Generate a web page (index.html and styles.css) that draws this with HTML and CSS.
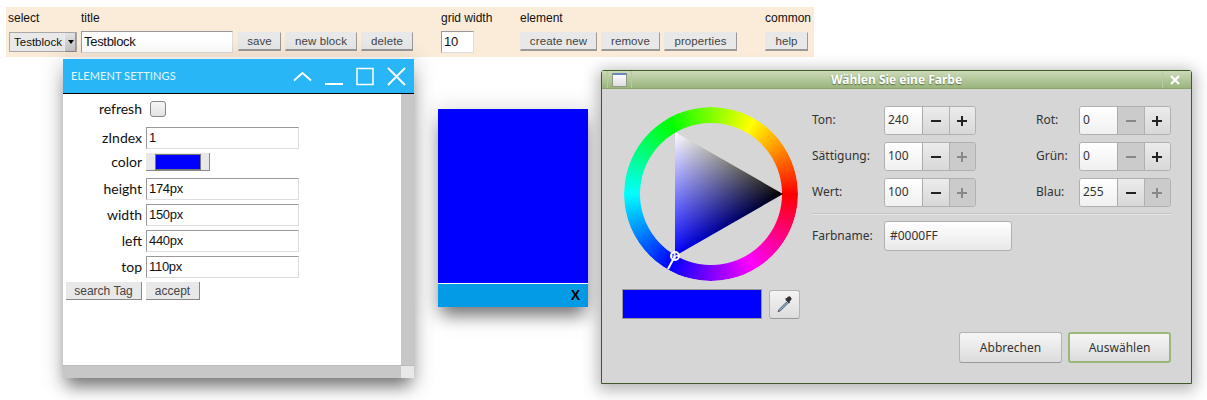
FILE: index.html
```html
<!DOCTYPE html>
<html lang="en">
<head>
<meta charset="utf-8">
<title>Block editor</title>
<link rel="stylesheet" href="styles.css">
</head>
<body>
<div class="toolbar">
  <div class="group g-select"><div class="glabel">select</div>
    <div class="controls"><span class="selectbox"><select class="sel"><option>Testblock</option></select></span></div></div>
  <div class="group g-title"><div class="glabel">title</div>
    <div class="controls"><input class="tinput title-input" value="Testblock"><button class="btn b-save">save</button><button class="btn b-new">new block</button><button class="btn b-del">delete</button></div></div>
  <div class="group g-grid"><div class="glabel">grid width</div>
    <div class="controls"><input class="tinput grid-input" value="10"></div></div>
  <div class="group g-element"><div class="glabel">element</div>
    <div class="controls"><button class="btn b-create">create new</button><button class="btn b-remove">remove</button><button class="btn b-props">properties</button></div></div>
  <div class="group g-common"><div class="glabel">common</div>
    <div class="controls"><button class="btn b-help">help</button></div></div>
</div>

<section class="settings">
  <header class="s-head">
    <span class="s-title">ELEMENT SETTINGS</span>
    <svg class="s-icons" width="120" height="34" viewBox="0 0 120 34" fill="none" stroke="#fff" stroke-width="1.800">
      <path d="M1 21.500 9.500 14l8.500 7.500"/>
      <path d="M32 25h18" stroke-width="2"/>
      <rect x="64" y="9.500" width="16" height="16" stroke-width="1.500"/>
      <path d="M95 9l17 17M112 9 95 26"/>
    </svg>
  </header>
  <div class="s-body">
    <div class="s-content">
      <div class="row row-refresh"><label class="rl">refresh</label><span class="check"></span></div>
      <div class="row"><label class="rl">zIndex</label><input class="tinput rinput" value="1"></div>
      <div class="row row-color"><label class="rl">color</label><button class="colorbtn"><span class="colorfill"></span></button></div>
      <div class="row"><label class="rl">height</label><input class="tinput rinput" value="174px"></div>
      <div class="row"><label class="rl">width</label><input class="tinput rinput" value="150px"></div>
      <div class="row"><label class="rl">left</label><input class="tinput rinput" value="440px"></div>
      <div class="row"><label class="rl">top</label><input class="tinput rinput" value="110px"></div>
      <div class="row row-btns"><button class="btn2 b-search">search Tag</button><button class="btn2 b-accept">accept</button></div>
    </div>
    <div class="sb-v"></div>
  </div>
  <div class="s-foot"><div class="sb-h"></div><div class="sb-corner"></div></div>
</section>

<div class="bluebox">
  <div class="bluefill"></div>
  <div class="bluebar"><span class="bluex">X</span></div>
</div>

<section class="dialog">
  <header class="d-title">
    <div class="d-tleft"><span class="d-menu"><span class="d-menu-ico"></span></span></div>
    <span class="d-caption">Wählen Sie eine Farbe</span>
    <div class="d-tright"><span class="d-close"><svg width="10" height="10" viewBox="0 0 10 10" stroke="#fff" stroke-width="2.200" fill="none"><path d="M1 1l8 8M9 1 1 9"/></svg></span></div>
  </header>
  <div class="d-body">
    <div class="d-main">
      <div class="d-left">
        <div class="wheelbox">
          <div class="wheel"></div>
          <div class="tri"></div>
          <svg class="marker" width="174" height="174" viewBox="0 0 174 174" fill="none" stroke="#fff">
            <path d="M51 149 44 162" stroke-width="2"/>
            <circle cx="51" cy="149" r="4" stroke-width="2"/>
            <path d="M51 145v8M47 149h8" stroke-width="1"/>
          </svg>
        </div>
        <div class="swatchrow">
          <div class="swatch"></div>
          <button class="pick"><svg width="18" height="18" viewBox="0 0 16 16">
            <path d="M9.300 6.300 2.800 12.800 1.800 15l2.200-1 6.500-6.500z" fill="#8fb0cc" stroke="#4a5560" stroke-width=".8"/>
            <path d="M8.500 4.500l3 3 1-1-.3-.9 1-1c1-1 .8-2-.1-2.700-.7-.9-1.700-1-2.700-.1l-1 1-.9-.3z" fill="#333"/>
          </svg></button>
        </div>
      </div>
      <div class="d-right">
        <div class="spins">
          <label class="sl">Ton:</label><div class="spin"><span class="sv">240</span><span class="sb"><i class="minus"></i></span><span class="sb"><i class="plus"></i></span></div>
          <label class="sl sl2">Rot:</label><div class="spin"><span class="sv">0</span><span class="sb off"><i class="minus"></i></span><span class="sb"><i class="plus"></i></span></div>
          <label class="sl">Sättigung:</label><div class="spin"><span class="sv">100</span><span class="sb"><i class="minus"></i></span><span class="sb off"><i class="plus"></i></span></div>
          <label class="sl sl2">Grün:</label><div class="spin"><span class="sv">0</span><span class="sb off"><i class="minus"></i></span><span class="sb"><i class="plus"></i></span></div>
          <label class="sl">Wert:</label><div class="spin"><span class="sv">100</span><span class="sb"><i class="minus"></i></span><span class="sb off"><i class="plus"></i></span></div>
          <label class="sl sl2">Blau:</label><div class="spin"><span class="sv">255</span><span class="sb"><i class="minus"></i></span><span class="sb off"><i class="plus"></i></span></div>
        </div>
        <div class="sep"></div>
        <div class="namerow"><label class="sl">Farbname:</label><div class="nameentry">#0000FF</div></div>
      </div>
    </div>
    <div class="d-actions"><button class="dbtn">Abbrechen</button><button class="dbtn default">Auswählen</button></div>
  </div>
</section>
</body>
</html>
```
FILE: styles.css
```css
* { box-sizing: border-box; }
html, body { margin: 0; padding: 0; }
body { width: 1207px; height: 400px; overflow: hidden; background: #fff; position: relative; font-family: "Liberation Sans", Arial, sans-serif; color: #111; }

/* toolbar */
.toolbar { display: flex; width: 808px; height: 50px; margin: 7px 0 0 6px; background: #fbebd9; padding-left: 2px; }
.group { display: flex; flex-direction: column; }
.glabel { font-size: 12px; height: 14px; line-height: 14px; margin-top: 4px; margin-bottom: 6px; }
.controls { display: flex; align-items: flex-start; }
.g-select { width: 73px; }
.g-title { width: 360px; }
.g-grid { width: 79px; }
.g-element { width: 245px; }
.selectbox { position: relative; display: block; width: 68px; height: 20px; margin: 1px 0 0 1px; border: 1px solid #a8a8a8; background: #e9e9e9; }
.selectbox::after { content: ""; position: absolute; right: 0; top: 0; width: 10px; height: 18px; background: linear-gradient(#e2e2e2, #c4c4c4); border-left: 1px solid #eee; border-right: 1px solid #999; border-bottom: 1px solid #888; }
.selectbox::before { content: ""; position: absolute; z-index: 1; right: 2px; top: 7px; border: 3px solid transparent; border-top: 4px solid #000; border-bottom: 0; }
.sel { appearance: none; display: block; width: 100%; height: 18px; border: 0; background: transparent; font: 11.500px "Liberation Sans", Arial, sans-serif; color: #111; padding: 0 0 0 4px; }
.tinput { display: block; border: 1px solid #ddd; border-top-color: #999; border-left-color: #999; background: #fff; font: 13px "Liberation Sans", Arial, sans-serif; letter-spacing: -.3px; color: #111; padding: 0 0 2px 2px; }
.title-input { width: 152px; height: 22px; }
.grid-input { width: 33px; height: 22px; }
.btn { display: block; height: 19px; padding: 0; margin: 1px 0 0 0; background: #e8e8e8; border: 1px solid #e8e8e8; border-right: 1px solid #999; border-bottom: 2px solid #999; font: 11.500px "Liberation Sans", Arial, sans-serif; letter-spacing: .1px; color: #444; }
.b-save { width: 43px; margin-left: 5px; }
.b-new { width: 72px; margin-left: 4px; }
.b-del { width: 52px; margin-left: 4px; }
.b-create { width: 77px; }
.b-remove { width: 59px; margin-left: 4px; }
.b-props { width: 73px; margin-left: 4px; }
.b-help { width: 43px; }

/* element settings window */
.settings { position: absolute; left: 63px; top: 59px; width: 351px; height: 319px; background: #fff; display: flex; flex-direction: column; box-shadow: 0 12px 16px -4px rgba(0,0,0,.5), 0 2px 20px 4px rgba(0,0,0,.12); }
.s-head { flex: none; height: 35px; background: #29b6f6; border-bottom: 1px solid #000; display: flex; align-items: center; justify-content: space-between; color: #fff; }
.s-title { font: 11px Lato, sans-serif; padding: 0 0 2px 8px; letter-spacing: .1px; color: #e6f6fe; }
.s-icons { display: block; margin-right: 1px; }
.s-body { flex: 1; display: flex; min-height: 0; }
.s-content { flex: 1; padding: 6px 0 0 3px; }
.sb-v { flex: none; width: 13px; background: #c6c7c6; }
.s-foot { flex: none; height: 13px; display: flex; border-top: 1px solid #bbb; }
.sb-h { flex: 1; background: #c6c7c6; }
.sb-corner { flex: none; width: 13px; background: #e8e8e8; }
.row { display: flex; align-items: center; height: 22px; margin-bottom: 4px; }
.row-refresh { height: 18px; margin-bottom: 9px; }
.row-color { height: 18px; margin-bottom: 7px; }
.rl { width: 76px; padding-bottom: 2px; text-align: right; font: 14px Lato, sans-serif; color: #111; }
.rinput { width: 153px; height: 22px; margin-left: 4px; }
.check { display: block; width: 16px; height: 16px; margin-left: 8px; border: 1px solid #888; border-radius: 3px; background: linear-gradient(#f6f6f6, #e2e2e2); }
.colorbtn { display: block; width: 64px; height: 18px; margin-left: 4px; padding: 0; background: #e8e8e8; border: 0; border-right: 1px solid #888; border-bottom: 1px solid #888; }
.colorfill { display: block; width: 46px; height: 16px; margin: 0 0 0 9px; background: #00f; border: 1px solid #777; }
.row-btns { height: 18px; align-items: flex-start; }
.btn2 { display: block; height: 18px; padding: 0; background: #e8e8e8; border: 0; border-right: 1px solid #888; border-bottom: 1px solid #888; font: 12px "Liberation Sans", Arial, sans-serif; color: #444; }
.b-search { width: 76px; }
.b-accept { width: 54px; margin-left: 4px; }

/* blue element */
.bluebox { position: absolute; left: 438px; top: 109px; width: 150px; height: 198px; background: #fff; display: flex; flex-direction: column; box-shadow: 0 12px 16px -4px rgba(0,0,0,.5), 0 2px 20px 4px rgba(0,0,0,.12); }
.bluefill { flex: none; height: 174px; background: #00f; }
.bluebar { flex: none; height: 23px; margin-top: 1px; background: #039be5; display: flex; align-items: center; justify-content: flex-end; padding: 0 8px 1px 0; }
.bluex { font: bold 14px "Liberation Sans", Arial, sans-serif; color: #000; }

/* colour dialog */
.dialog { position: absolute; left: 601px; top: 70px; width: 591px; height: 314px; background: #d6d6d6; border: 1px solid #3f5a24; border-radius: 3px 3px 0 0; display: flex; flex-direction: column; box-shadow: 0 3px 16px 3px rgba(0,0,0,.3); }
.d-title { flex: none; height: 18px; display: grid; grid-template-columns: 1fr auto 1fr; align-items: stretch; background: linear-gradient(#cbdab9, #9ab47d); border-bottom: 1px solid #8aa46d; }
.d-tleft { display: flex; padding-left: 5px; }
.d-tright { display: flex; justify-content: flex-end; padding-right: 1px; }
.d-menu { display: flex; align-items: flex-start; padding: 2px 4px 0 4px; border-left: 1px solid #b6c9a2; border-right: 1px solid #b6c9a2; }
.d-menu-ico { display: block; width: 15px; height: 14px; background: linear-gradient(#fafafa, #dedede); border: 1px solid #8c9c80; border-top: 2px solid #6a86ba; border-radius: 1px; }
.d-caption { font: bold 12px/17px "Noto Sans", sans-serif; color: #fff; text-shadow: 0 1px 1px rgba(60,80,40,.7); }
.d-close { display: flex; align-items: center; justify-content: center; width: 28px; padding-right: 4px; border-left: 1px solid #b6c9a2; }
.d-close svg { display: block; }
.d-body { flex: 1; display: flex; flex-direction: column; padding: 0 20px 20px 20px; font: 12px "Noto Sans", sans-serif; color: #333; }
.d-main { flex: 1; display: flex; }
.d-left { flex: none; width: 190px; padding-top: 18px; }
.wheelbox { position: relative; width: 174px; height: 174px; margin-left: 2px; }
.wheel { width: 174px; height: 174px; border-radius: 50%; background: conic-gradient(from 90deg, #f00, #f0f 60deg, #00f 120deg, #0ff 180deg, #0f0 240deg, #ff0 300deg, #f00 360deg); -webkit-mask: radial-gradient(circle at center, transparent 70.500px, #000 71.500px); mask: radial-gradient(circle at center, transparent 70.500px, #000 71.500px); }
.tri { position: absolute; left: 51px; top: 25px; width: 108px; height: 124px; clip-path: polygon(0 0, 100% 50%, 0 100%); background: linear-gradient(330deg, #000 33.330%, #ff0 100%), linear-gradient(90deg, #00f, #000); background-blend-mode: screen; }
.marker { position: absolute; left: 0; top: 0; display: block; }
.swatchrow { display: flex; align-items: center; margin-top: 8px; }
.swatch { width: 140px; height: 30px; background: #00f; border: 1px solid #999; }
.pick { display: flex; align-items: center; justify-content: center; width: 31px; height: 29px; margin-left: 7px; padding: 0; background: linear-gradient(#f4f4f4, #dcdcdc); border: 1px solid #b4b4b4; border-bottom-color: #999; border-radius: 3px; }
.d-right { flex: none; width: 360px; padding-top: 17px; }
.spins { display: grid; grid-template-columns: 72px 92px 103px 92px; row-gap: 7px; justify-content: start; }
.sl { display: flex; align-items: center; height: 29px; padding-bottom: 2px; font-size: 12px; color: #333; }
.sl2 { margin-left: 60px; width: 43px; }
.spin { display: flex; height: 29px; border: 1px solid #b0b0b0; border-radius: 3px; overflow: hidden; background: #d8d8d8; }
.sv { width: 38px; background: linear-gradient(#fff, #f0f0f0); border-right: 1px solid #aaa; padding: 0 0 2px 3px; display: flex; align-items: center; font-size: 12px; color: #333; }
.sb { position: relative; flex: 1; background: linear-gradient(#ececec, #d8d8d8); border-right: 1px solid #b0b0b0; }
.sb:last-child { border-right: 0; }
.sb.off { background: #cbcbcb; }
.sb i { position: absolute; left: 50%; top: 50%; width: 10px; height: 10px; margin: -5px 0 0 -5px; }
.minus::before, .plus::before, .plus::after { content: ""; position: absolute; background: #222; }
.minus::before, .plus::before { left: 0; top: 4px; width: 10px; height: 2px; }
.plus::after { left: 4px; top: 0; width: 2px; height: 10px; }
.off .minus::before, .off .plus::before, .off .plus::after { background: #888; }
.sep { width: 359px; height: 2px; margin-top: 6px; background: #c4c4c4; border-bottom: 1px solid #e4e4e4; }
.namerow { display: flex; margin-top: 6px; }
.namerow .sl { width: 72px; height: 30px; }
.nameentry { width: 128px; height: 30px; border: 1px solid #b0b0b0; border-radius: 3px; background: linear-gradient(#fff, #e8e8e8); padding: 0 0 1px 5px; display: flex; align-items: center; }
.d-actions { flex: none; display: flex; justify-content: flex-end; gap: 6px; }
.dbtn { width: 103px; height: 31px; padding: 0; background: linear-gradient(#f6f6f6, #dcdcdc); border: 1px solid #b4b4b4; border-bottom-color: #999; border-radius: 3px; font: 12px "Noto Sans", sans-serif; color: #333; }
.dbtn.default { border: 2px solid #9ab77c; }
```
